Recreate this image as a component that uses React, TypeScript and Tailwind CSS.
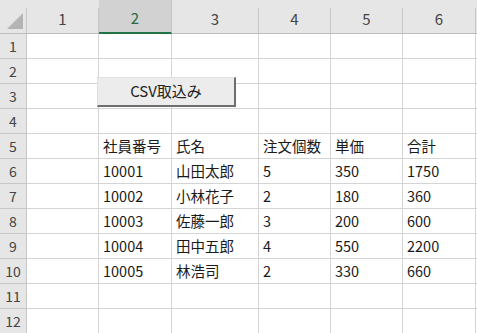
const cols = ["1", "2", "3", "4", "5", "6"];
const widths = ["w-[72px]", "w-[73px]", "w-[87px]", "w-[72px]", "w-[72px]", "w-[73px]"];

const rows: string[][] = [
  [],
  [],
  [],
  [],
  ["", "社員番号", "氏名", "注文個数", "単価", "合計"],
  ["", "10001", "山田太郎", "5", "350", "1750"],
  ["", "10002", "小林花子", "2", "180", "360"],
  ["", "10003", "佐藤一郎", "3", "200", "600"],
  ["", "10004", "田中五郎", "4", "550", "2200"],
  ["", "10005", "林浩司", "2", "330", "660"],
  [],
  [],
];

const HeaderRow = () => (
  <div className="flex h-[34px] bg-[#e6e6e6] border-b border-[#bdbdbd]">
    <div className="relative w-[27px] shrink-0 border-r border-[#c6c6c6] mt-[8px]">
      <div className="absolute left-[7px] top-[5px] w-0 h-0 border-l-[16px] border-l-transparent border-b-[16px] border-b-[#b4b4b4]" />
    </div>
    {cols.map((c, i) => (
      <div
        key={c}
        className={`${widths[i]} shrink-0 flex items-end justify-center pb-[3px] text-[15px] ${
          i === 1
            ? "bg-[#d2d2d2] text-[#2a6b47] border-b-2 border-[#217346] -mb-[1px] border-r border-r-[#c6c6c6]"
            : "text-[#444] border-r border-[#c6c6c6] mt-[8px] pb-[3px]"
        }`}
      >
        {i === 1 ? <span className="mt-[8px]">{c}</span> : c}
      </div>
    ))}
    <div className="flex-1 mt-[8px]" />
  </div>
);

export default function App() {
  return (
    <div
      className="relative w-[477px] h-[333px] overflow-hidden bg-white"
      style={{ fontFamily: '"Noto Sans CJK JP", "Noto Sans", sans-serif' }}
    >
      <HeaderRow />
      {rows.map((r, ri) => (
        <div key={ri} className="flex h-[25px]">
          <div className="w-[27px] shrink-0 bg-[#e6e6e6] border-r border-b border-[#c6c6c6] flex items-center justify-center text-[14px] text-[#444]">
            {ri + 1}
          </div>
          {cols.map((c, ci) => (
            <div
              key={c}
              className={`${widths[ci]} shrink-0 border-r border-b border-[#d4d4d4] flex items-center pl-[4px] text-[14.5px] text-[#1a1a1a] whitespace-nowrap overflow-hidden`}
            >
              {r[ci] ?? ""}
            </div>
          ))}
          <div className="flex-1 border-b border-[#d4d4d4]" />
        </div>
      ))}
      <button className="absolute left-[97px] top-[77px] w-[139px] h-[30px] bg-[#ececec] border-t border-l border-[#e0e0e0] border-r-2 border-b-2 border-r-[#6e6e6e] border-b-[#6e6e6e] text-[15px] text-[#222] flex items-center justify-center">
        CSV取込み
      </button>
    </div>
  );
}
